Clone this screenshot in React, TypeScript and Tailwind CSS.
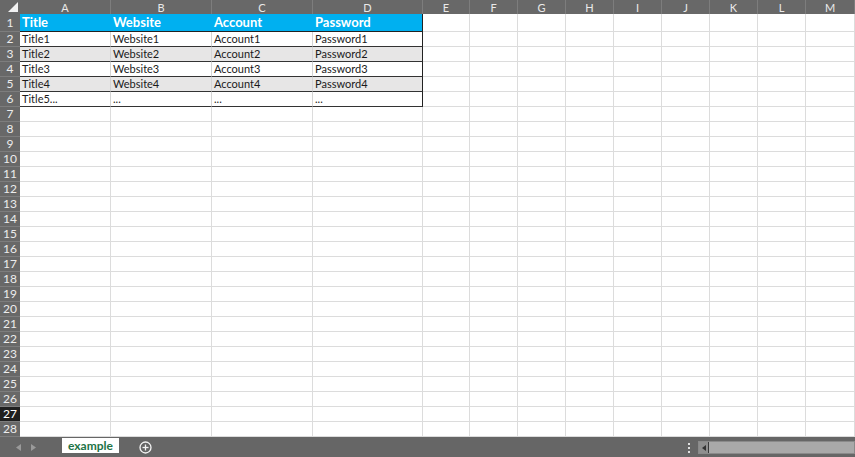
import React from "react"

const colWidths = [91, 101, 101, 110, 47, 48, 48, 48, 48, 48, 48, 48, 49]
const letters = ["A", "B", "C", "D", "E", "F", "G", "H", "I", "J", "K", "L", "M"]

const headerRow = ["Title", "Website", "Account", "Password"]
const dataRows = [
  ["Title1", "Website1", "Account1", "Password1"],
  ["Title2", "Website2", "Account2", "Password2"],
  ["Title3", "Website3", "Account3", "Password3"],
  ["Title4", "Website4", "Account4", "Password4"],
  ["Title5...", "...", "...", "..."],
]

const gridCols =
  "grid-cols-[20px_91px_101px_101px_110px_47px_48px_48px_48px_48px_48px_48px_48px_49px]"

function RowHeader({ n }: { n: number }) {
  const selected = n === 27
  return (
    <div
      className={
        "flex items-center justify-center border-b border-[#7d7d7d] text-[12px] leading-none " +
        (selected ? "bg-[#1f1f1f] text-white" : "bg-[#686868] text-[#ececec]")
      }
    >
      {n}
    </div>
  )
}

function Cell({ row, col }: { row: number; col: number }) {
  // row is 1-based sheet row, col is 0-based column index (A = 0)
  const inTable = row <= 6 && col <= 3
  if (row === 1 && inTable) {
    return (
      <div
        className={
          "flex items-center bg-[#00b0f0] pl-[2px] text-[13px] font-bold text-white border-b border-[#222] " +
          (col === 3 ? "border-r border-r-[#222]" : "")
        }
      >
        {headerRow[col]}
      </div>
    )
  }
  if (inTable) {
    const shaded = row === 3 || row === 5
    return (
      <div
        className={
          "flex items-center pl-[2px] text-[11px] text-[#1a1a1a] border-b border-[#333] " +
          (col === 3 ? "border-r border-r-[#222] " : "border-r border-r-[#d4d4d4] ") +
          (shaded ? "bg-[#e7e6e6]" : "bg-white")
        }
      >
        {dataRows[row - 2][col]}
      </div>
    )
  }
  return <div className="border-r border-b border-[#dcdcdc] bg-white" />
}

export default function App() {
  const rows = Array.from({ length: 28 }, (_, i) => i + 1)

  return (
    <div
      className="flex h-[457px] w-[855px] flex-col overflow-hidden bg-white"
      style={{ fontFamily: "Lato, 'Open Sans', 'Liberation Sans', sans-serif" }}
    >
      <div className={`grid ${gridCols} grid-rows-[14px_18px_repeat(27,15px)]`}>
        {/* corner */}
        <div className="relative bg-[#686868]">
          <svg className="absolute right-[2px] bottom-[2px]" width="10" height="10" viewBox="0 0 10 10">
            <polygon points="10,0 10,10 0,10" fill="#f2f2f2" />
          </svg>
        </div>
        {letters.map((l, i) => (
          <div
            key={l}
            className="flex items-center justify-center border-r border-[#7d7d7d] bg-[#686868] text-[11px] leading-none text-[#eaeaea]"
            style={{ width: colWidths[i] }}
          >
            {l}
          </div>
        ))}
        {rows.map((r) => (
          <React.Fragment key={r}>
            <RowHeader n={r} />
            {letters.map((l, c) => (
              <Cell key={l} row={r} col={c} />
            ))}
          </React.Fragment>
        ))}
      </div>

      {/* sheet tabs bar */}
      <div className="relative flex flex-1 items-start bg-[#666666] pt-[1px]">
        <div className="flex h-full items-center gap-[10px] pl-[16px] pr-[16px] text-[#9a9a9a]">
          <svg width="5" height="7" viewBox="0 0 5 7">
            <polygon points="5,0 5,7 0,3.5" fill="#9a9a9a" />
          </svg>
          <svg width="5" height="7" viewBox="0 0 5 7">
            <polygon points="0,0 0,7 5,3.5" fill="#9a9a9a" />
          </svg>
        </div>
        <div className="ml-[10px] flex h-[15px] w-[57px] items-center justify-center bg-white text-[12px] font-bold text-[#217346]">
          example
        </div>
        <div className="ml-[20px] flex h-full items-center">
          <svg width="13" height="13" viewBox="0 0 13 13">
            <circle cx="6.5" cy="6.5" r="5.5" fill="none" stroke="#f4f4f4" strokeWidth="1.3" />
            <line x1="6.5" y1="3.5" x2="6.5" y2="9.5" stroke="#f4f4f4" strokeWidth="1.3" />
            <line x1="3.5" y1="6.5" x2="9.5" y2="6.5" stroke="#f4f4f4" strokeWidth="1.3" />
          </svg>
        </div>
        <div className="ml-auto flex h-full items-center">
          <div className="mr-[8px] flex flex-col gap-[2px]">
            <span className="block h-[2px] w-[2px] bg-[#e0e0e0]" />
            <span className="block h-[2px] w-[2px] bg-[#e0e0e0]" />
            <span className="block h-[2px] w-[2px] bg-[#e0e0e0]" />
          </div>
          <div className="flex h-[13px] w-[157px] items-stretch border border-[#8a8a8a] bg-[#a9a9a9]">
            <div className="flex w-[10px] items-center justify-center border-r border-[#3a3a3a] bg-[#8f8f8f]">
              <svg width="4" height="6" viewBox="0 0 4 6">
                <polygon points="4,0 4,6 0,3" fill="#333" />
              </svg>
            </div>
            <div className="flex-1" />
          </div>
        </div>
      </div>
    </div>
  )
}
